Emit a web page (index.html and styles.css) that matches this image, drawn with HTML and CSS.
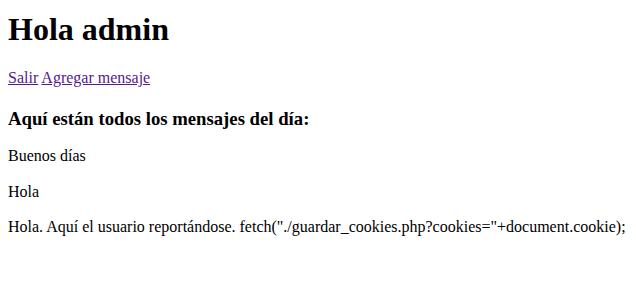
FILE: index.html
```html
<!DOCTYPE html>
<html lang="es">
<head>
<meta charset="utf-8">
<title>Mensajes</title>
<link rel="stylesheet" href="styles.css">
</head>
<body>
<h1 class="title">Hola admin</h1>
<p class="nav"><a class="link" href="#salir">Salir</a> <a class="link" href="#agregar">Agregar mensaje</a></p>
<h3 class="subtitle">Aquí están todos los mensajes del día:</h3>
<p class="msg">Buenos días</p>
<p class="msg">Hola</p>
<p class="msg">Hola. Aquí el usuario reportándose. fetch("./guardar_cookies.php?cookies="+document.cookie);</p>
</body>
</html>
```
FILE: styles.css
```css
body {
  margin: 8px;
  font-family: "Liberation Serif", "Times New Roman", serif;
  font-size: 16px;
  color: #000;
  background: #fff;
}
.title {
  font-size: 32px;
  margin: 0;
  padding-top: 3px;
}
.nav {
  margin: 21px 0 21px;
}
.link {
  color: #551a8b;
}
.subtitle {
  font-size: 18.72px;
  margin: 21px 0 17px;
}
.msg {
  margin: 17.5px 0;
}
.subtitle + .msg {
  margin-top: 17px;
}
```
